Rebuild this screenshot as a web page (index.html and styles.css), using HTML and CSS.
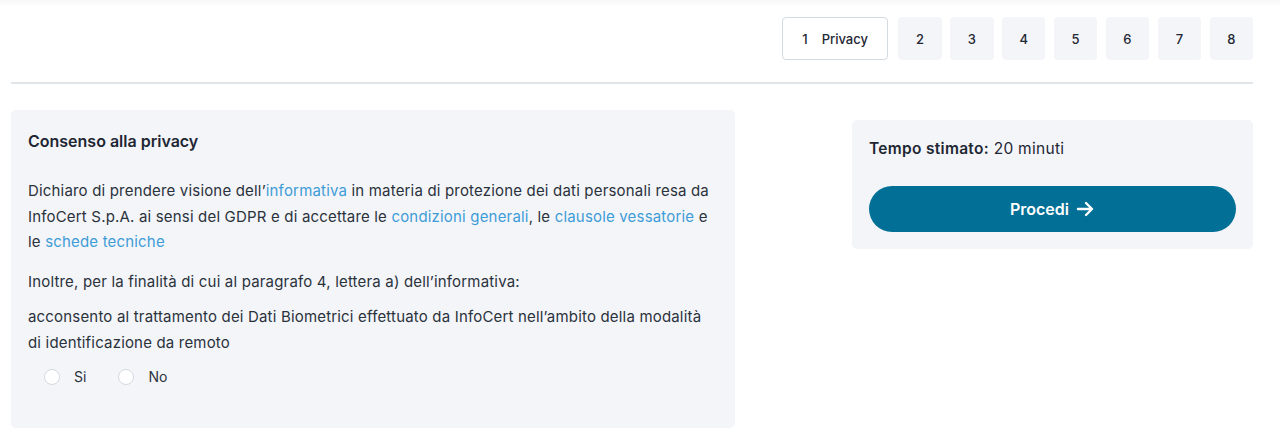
FILE: index.html
```html
<!DOCTYPE html>
<html lang="it">
<head>
<meta charset="utf-8">
<title>Consenso alla privacy</title>
<link rel="stylesheet" href="styles.css">
</head>
<body>
<div class="topshade"></div>
<div class="page">
  <nav class="steps">
    <div class="step step-active"><span class="step-num">1</span><span class="step-label">Privacy</span></div>
    <div class="step">2</div>
    <div class="step">3</div>
    <div class="step">4</div>
    <div class="step">5</div>
    <div class="step">6</div>
    <div class="step">7</div>
    <div class="step">8</div>
  </nav>
  <hr class="divider">
  <div class="content">
    <section class="card consent">
      <h2 class="card-title">Consenso alla privacy</h2>
      <p class="text text-first">Dichiaro di prendere visione dell’<a class="link">informativa</a> in materia di protezione dei dati personali resa da InfoCert S.p.A. ai sensi del GDPR e di accettare le <a class="link">condizioni generali</a>, le <a class="link">clausole vessatorie</a> e le <a class="link">schede tecniche</a></p>
      <p class="text">Inoltre, per la finalità di cui al paragrafo 4, lettera a) dell’informativa:</p>
      <p class="text">acconsento al trattamento dei Dati Biometrici effettuato da InfoCert nell’ambito della modalità di identificazione da remoto</p>
      <div class="radios">
        <label class="radio"><span class="radio-dot"></span><span>Si</span></label>
        <label class="radio"><span class="radio-dot"></span><span>No</span></label>
      </div>
    </section>
    <aside class="card side">
      <p class="time"><strong>Tempo stimato:</strong> 20 minuti</p>
      <button class="btn">Procedi
        <svg class="arrow" width="20" height="20" viewBox="0 0 20 20" fill="none" stroke="#fff" stroke-width="2.4" stroke-linecap="round" stroke-linejoin="round"><path d="M3 10h14M11 4l6 6-6 6"/></svg>
      </button>
    </aside>
  </div>
</div>
</body>
</html>
```
FILE: styles.css
```css
* { box-sizing: border-box; }
html, body { margin: 0; padding: 0; background: #fff; }
body {
  font-family: Inter, "Noto Sans", sans-serif;
  color: #1e2733;
  position: relative;
  height: 445px;
  overflow: hidden;
}
.topshade {
  position: absolute;
  left: 0; right: 0; top: 0;
  height: 5px;
  background: linear-gradient(#f7f7f7, #fdfdfd);
}
.page {
  padding: 17px 27px 0 11px;
}
.steps {
  display: flex;
  justify-content: flex-end;
  gap: 8.4px;
}
.step {
  width: 43.5px;
  height: 43px;
  border-radius: 4px;
  background: #f4f5f9;
  display: flex;
  align-items: center;
  justify-content: center;
  font-size: 13px;
  font-weight: 500;
  color: #1e2733;
}
.step-active {
  width: 106px;
  background: #fff;
  border: 1px solid #d3dae0;
  justify-content: flex-start;
  padding-left: 19px;
  gap: 14px;
  margin-right: 1.5px;
}
.divider {
  border: 0;
  height: 2px;
  background: #e0e5ea;
  margin: 22px 0 0 0;
}
.content {
  display: flex;
  justify-content: space-between;
  align-items: flex-start;
  margin-top: 26px;
}
.card {
  background: #f4f5f9;
  border-radius: 5px;
}
.consent {
  width: 724px;
  min-height: 318px;
  padding: 20px 17px 20px 17px;
}
.card-title {
  margin: 0 0 26px 0;
  font-size: 16px;
  font-weight: 600;
  line-height: 22px;
}
.text {
  margin: 0 0 10px 0;
  font-size: 15px;
  line-height: 25.5px;
  letter-spacing: 0.18px;
  color: #2a323c;
}
.text-first { margin-bottom: 14px; }
.link { color: #3e9cd7; text-decoration: none; }
.radios {
  display: flex;
  gap: 32px;
  padding-left: 16px;
  margin-top: 13px;
}
.radio {
  display: flex;
  align-items: center;
  gap: 14px;
  font-size: 14px;
  color: #2a323c;
}
.radio-dot {
  width: 16px; height: 16px;
  border-radius: 50%;
  background: #fff;
  border: 1px solid #d2dae0;
}
.side {
  width: 401px;
  margin-top: 10px;
  padding: 18px 17px 17px 17px;
}
.time {
  margin: 0 0 26px 0;
  font-size: 15.5px;
  line-height: 22px;
  letter-spacing: 0.3px;
}
.time strong { font-weight: 600; }
.btn {
  width: 100%;
  height: 46px;
  border: 0;
  border-radius: 23px;
  background: #016f96;
  color: #fff;
  font-family: inherit;
  font-size: 16px;
  font-weight: 600;
  display: flex;
  align-items: center;
  justify-content: center;
  gap: 6px;
}
```
